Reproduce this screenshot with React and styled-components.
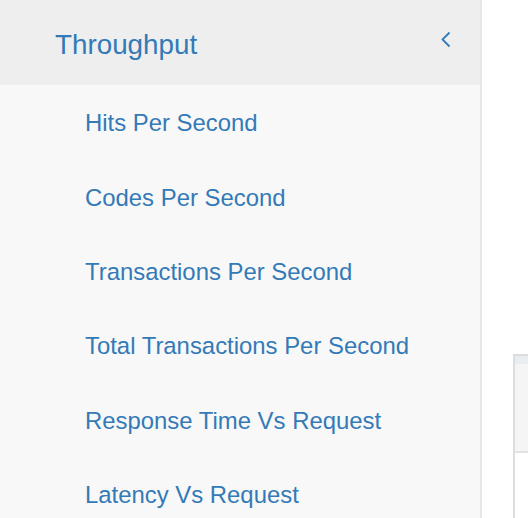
import styled, { createGlobalStyle } from "styled-components";

const GlobalStyle = createGlobalStyle`
  html, body {
    margin: 0;
    padding: 0;
    background: #fff;
    font-family: "Liberation Sans", Arial, sans-serif;
    overflow: hidden;
  }
`;

const items = [
  "Hits Per Second",
  "Codes Per Second",
  "Transactions Per Second",
  "Total Transactions Per Second",
  "Response Time Vs Request",
  "Latency Vs Request",
];

function App() {
  return (
    <>
      <GlobalStyle />
      <Page>
        <Sidebar>
          <MenuHeader>
            <HeaderTitle>Throughput</HeaderTitle>
            <Chevron width="12" height="18" viewBox="0 0 12 18">
              <polyline points="9.5,1.5 2.5,8.5 9.5,15.5" />
            </Chevron>
          </MenuHeader>
          <SubMenu>
            {items.map((label) => (
              <SubItem key={label}>
                <SubLink>{label}</SubLink>
              </SubItem>
            ))}
          </SubMenu>
        </Sidebar>
        <Main>
          <Panel>
            <PanelHeading />
            <PanelBody />
          </Panel>
        </Main>
      </Page>
    </>
  );
}

export default App;

const Page = styled.div`
  display: flex;
  height: 518px;
  width: 528px;
  overflow: hidden;
`;

const Sidebar = styled.nav`
  width: 480px;
  flex-shrink: 0;
  background: #f8f8f8;
  border-right: 2px solid #e7e7e7;
`;

const MenuHeader = styled.div`
  height: 85px;
  background: #eeeeee;
  display: flex;
  align-items: center;
  justify-content: space-between;
  padding: 0 28px 0 55px;
  box-sizing: border-box;
`;

const HeaderTitle = styled.span`
  font-size: 27.8px;
  color: #337ab7;
  margin-top: 4px;
`;

const Chevron = styled.svg`
  fill: none;
  stroke: #337ab7;
  stroke-width: 1.8;
  margin-top: -5px;
`;

const SubMenu = styled.ul`
  list-style: none;
  margin: 0;
  padding: 0;
`;

const SubItem = styled.li`
  height: 74.4px;
  display: flex;
  align-items: center;
  padding-left: 85px;
`;

const SubLink = styled.a`
  font-size: 23.9px;
  color: #337ab7;
  text-decoration: none;
  cursor: pointer;
  margin-top: 2px;
`;

const Main = styled.main`
  flex: 1;
  padding: 354px 0 0 31px;
`;

const Panel = styled.div`
  border: 2px solid #dddddd;
  border-right: none;
  height: 162px;
  display: flex;
  flex-direction: column;
`;

const PanelHeading = styled.div`
  height: 8px;
  background: #e9edf1;
`;

const PanelBody = styled.div`
  height: 87px;
  background: #f5f5f5;
  border-bottom: 2px solid #e3e3e3;
`;
